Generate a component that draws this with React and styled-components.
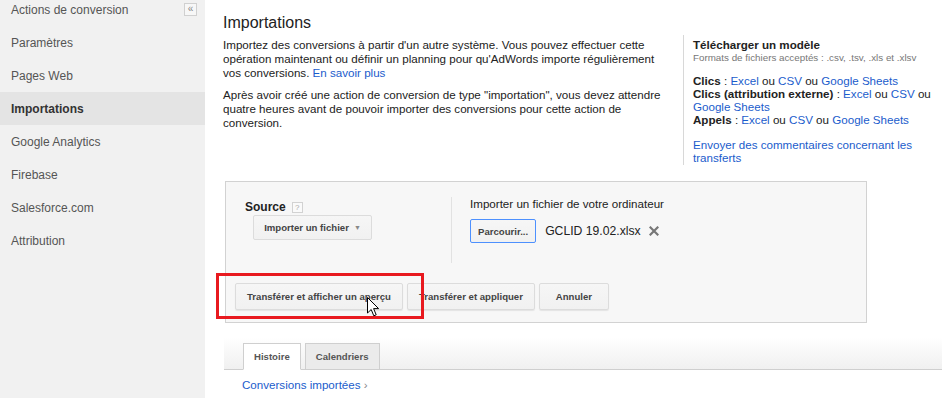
import React from 'react'
import styled, { createGlobalStyle } from 'styled-components'

const GlobalStyle = createGlobalStyle`
body {
    margin: 0;
    background: #fff;
    font-family: "Liberation Sans", Arial, sans-serif;
    color: #222;
}
`

const navItems = [
    'Actions de conversion',
    'Paramètres',
    'Pages Web',
    'Importations',
    'Google Analytics',
    'Firebase',
    'Salesforce.com',
    'Attribution',
]

const CloseIcon = () => (
    <svg width="10" height="10" viewBox="0 0 10 10">
        <path d="M1.5 1.5 L8.5 8.5 M8.5 1.5 L1.5 8.5" stroke="#777" strokeWidth="2.2" strokeLinecap="square" />
    </svg>
)

const Cursor = () => (
    <svg width="13" height="20" viewBox="0 0 13 20">
        <path d="M0.5 0.5 L0.5 16 L4.2 12.5 L6.8 18.8 L9.2 17.8 L6.6 11.6 L11.6 11.6 Z" fill="#fff" stroke="#000" strokeWidth="1" strokeLinejoin="miter" />
    </svg>
)

export default function App() {
    return (
        <Page>
            <GlobalStyle />
            <Sidebar>
                <Collapse>«</Collapse>
                <NavList>
                    {navItems.map((item) => (
                        <NavItem key={item} active={item === 'Importations'}>{item}</NavItem>
                    ))}
                </NavList>
            </Sidebar>
            <Main>
                <Header>
                    <Intro>
                        <Title>Importations</Title>
                        <Para>
                            Importez des conversions à partir d'un autre système. Vous pouvez effectuer cette
                            opération maintenant ou définir un planning pour qu'AdWords importe régulièrement
                            vos conversions. <Link>En savoir plus</Link>
                        </Para>
                        <Para gap>
                            Après avoir créé une action de conversion de type "importation", vous devez attendre
                            quatre heures avant de pouvoir importer des conversions pour cette action de
                            conversion.
                        </Para>
                    </Intro>
                    <Aside>
                        <AsideTitle>Télécharger un modèle</AsideTitle>
                        <Formats>Formats de fichiers acceptés : .csv, .tsv, .xls et .xlsv</Formats>
                        <Templates>
                            <b>Clics</b> : <Link>Excel</Link> ou <Link>CSV</Link> ou <Link>Google Sheets</Link><br />
                            <b>Clics (attribution externe)</b> : <Link>Excel</Link> ou <Link>CSV</Link> ou <Link>Google Sheets</Link><br />
                            <b>Appels</b> : <Link>Excel</Link> ou <Link>CSV</Link> ou <Link>Google Sheets</Link>
                        </Templates>
                        <Feedback><Link>Envoyer des commentaires concernant les transferts</Link></Feedback>
                    </Aside>
                </Header>

                <UploadBox>
                    <TopRow>
                        <SourceCol>
                            <Label>Source <Help>?</Help></Label>
                            <Dropdown>Importer un fichier <Caret>▼</Caret></Dropdown>
                        </SourceCol>
                        <FileCol>
                            <FileLabel>Importer un fichier de votre ordinateur</FileLabel>
                            <FileRow>
                                <Button focused>Parcourir...</Button>
                                <FileName>GCLID 19.02.xlsx</FileName>
                                <CloseIcon />
                            </FileRow>
                        </FileCol>
                    </TopRow>
                    <ButtonRow>
                        <Highlight />
                        <Button tall>Transférer et afficher un aperçu</Button>
                        <Button tall>Transférer et appliquer</Button>
                        <Button tall>Annuler</Button>
                        <Pointer><Cursor /></Pointer>
                    </ButtonRow>
                </UploadBox>

                <TabBar>
                    <Tab active>Histoire</Tab>
                    <Tab>Calendriers</Tab>
                </TabBar>
                <SubLink><Link>Conversions importées</Link> <Chevron>›</Chevron></SubLink>
            </Main>
        </Page>
    )
}

const Page = styled.div`
display: flex;
height: 398px;
overflow: hidden;
`
const Sidebar = styled.div`
position: relative;
width: 205px;
flex-shrink: 0;
background: #f1f1f1;
`
const Collapse = styled.div`
position: absolute;
top: 3px;
right: 8px;
width: 11px;
height: 11px;
border: 1px solid #d0d0d0;
background: #f7f7f7;
color: #888;
font-size: 10px;
line-height: 10px;
text-align: center;
`
const NavList = styled.div`
margin-top: -7px;
`
const NavItem = styled.div`
height: 33px;
display: flex;
align-items: center;
padding-left: 11px;
font-size: 12px;
color: ${({ active }) => (active ? '#333' : '#555')};
font-weight: ${({ active }) => (active ? 'bold' : 'normal')};
background: ${({ active }) => (active ? '#e4e4e4' : 'transparent')};
`
const Main = styled.div`
flex: 1;
padding: 13px 0 0 18px;
`
const Header = styled.div`
display: flex;
`
const Intro = styled.div`
width: 450px;
`
const Title = styled.h1`
margin: 0;
font-size: 16px;
line-height: 20px;
font-weight: normal;
color: #222;
`
const Para = styled.p`
margin: ${({ gap }) => (gap ? '8px' : '5px')} 0 0;
font-size: 11.6px;
line-height: 14px;
color: #222;
`
const Link = styled.a`
color: #1a5ccc;
cursor: pointer;
`
const Aside = styled.div`
margin: 22px 0 0 10px;
padding: 3px 0 1px 9px;
border-left: 1px solid #d8d8d8;
width: 248px;
font-size: 11.6px;
line-height: 13px;
`
const AsideTitle = styled.div`
font-weight: bold;
line-height: 14px;
color: #222;
`
const Formats = styled.div`
font-size: 9.8px;
line-height: 11px;
color: #777;
`
const Templates = styled.div`
margin-top: 11px;
color: #222;
b {
    color: #222;
}
`
const Feedback = styled.div`
margin-top: 12px;
`
const UploadBox = styled.div`
margin: 16px 0 0 2px;
width: 640px;
border: 1px solid #d2d2d2;
background: #f7f7f7;
padding-bottom: 12px;
`
const TopRow = styled.div`
display: flex;
margin-top: 15px;
`
const SourceCol = styled.div`
width: 206px;
padding: 3px 0 0 19px;
height: 63px;
border-right: 1px solid #e2e2e2;
`
const Label = styled.div`
display: flex;
align-items: center;
gap: 6px;
font-size: 12px;
font-weight: bold;
line-height: 14px;
color: #222;
`
const Help = styled.span`
width: 9px;
height: 9px;
border: 1px solid #d2d2d2;
background: #fafafa;
color: #aaa;
font-size: 8px;
line-height: 9px;
text-align: center;
font-weight: normal;
`
const Dropdown = styled.div`
margin: 1px 0 0 8px;
width: 117px;
height: 23px;
border: 1px solid #dcdcdc;
border-radius: 2px;
background: linear-gradient(#f6f6f6, #f1f1f1);
display: flex;
align-items: center;
justify-content: center;
gap: 5px;
font-size: 9.6px;
font-weight: bold;
color: #444;
`
const Caret = styled.span`
font-size: 7px;
color: #888;
`
const FileCol = styled.div`
padding-left: 18px;
`
const FileLabel = styled.div`
font-size: 11.6px;
line-height: 14px;
color: #222;
`
const FileRow = styled.div`
display: flex;
align-items: center;
margin-top: 8px;
gap: 9px;
`
const FileName = styled.span`
font-size: 12.2px;
color: #222;
margin-right: -1px;
`
const Button = styled.div`
box-sizing: border-box;
height: ${({ tall }) => (tall ? '27px' : '24px')};
min-width: ${({ tall }) => (tall ? '70px' : '0')};
padding: 0 ${({ tall }) => (tall ? '11px' : '7px')};
border: 1px solid ${({ focused }) => (focused ? '#4d90fe' : '#dcdcdc')};
border-radius: 2px;
background: linear-gradient(#f6f6f6, #f1f1f1);
box-shadow: ${({ tall }) => (tall ? '0 1px 1px rgba(0,0,0,0.08)' : 'none')};
display: flex;
align-items: center;
justify-content: center;
font-size: 9.6px;
font-weight: bold;
color: #444;
white-space: nowrap;
`
const ButtonRow = styled.div`
position: relative;
display: flex;
gap: 4px;
margin: 20px 0 0 9px;
`
const Highlight = styled.div`
position: absolute;
left: -19px;
top: -10px;
width: 202px;
height: 40px;
border: 3px solid #e8191f;
`
const Pointer = styled.div`
position: absolute;
left: 132px;
top: 14px;
line-height: 0;
`
const TabBar = styled.div`
margin: 14px 0 0 1px;
height: 32px;
padding-left: 19px;
display: flex;
align-items: flex-end;
gap: 4px;
border-bottom: 1px solid #cfcfcf;
background: linear-gradient(#ffffff, #f0f0f0);
`
const Tab = styled.div`
height: 25px;
margin-bottom: -1px;
padding: 0 10px;
display: flex;
align-items: center;
border: 1px solid #cfcfcf;
border-bottom: ${({ active }) => (active ? '1px solid #fff' : '1px solid #cfcfcf')};
background: ${({ active }) => (active ? '#fff' : '#ebebeb')};
font-size: 9.6px;
font-weight: bold;
color: #555;
`
const SubLink = styled.div`
margin: 8px 0 0 19px;
font-size: 11.6px;
line-height: 14px;
`
const Chevron = styled.span`
color: #888;
`
